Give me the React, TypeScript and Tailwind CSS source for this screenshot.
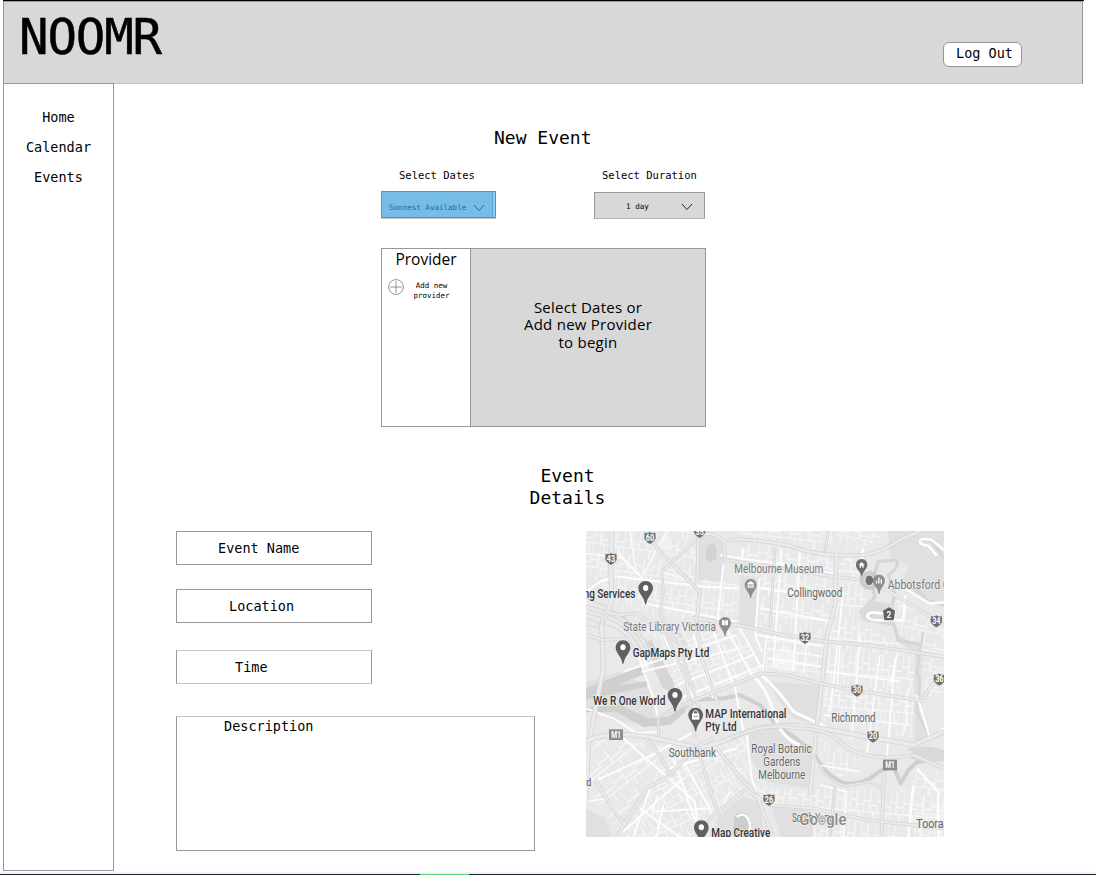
import type { ReactNode } from "react";

const MONO = "font-['DejaVu_Sans_Mono',monospace]";
const SANS = "font-['Open_Sans',sans-serif]";

function Chevron({ stroke }: { stroke: string }) {
  return (
    <svg width="12" height="8" viewBox="0 0 12 8" fill="none" stroke={stroke} strokeWidth="1">
      <path d="M1 1 L6 6.6 L11 1" />
    </svg>
  );
}

function Header() {
  return (
    <header className="ml-[3px] flex h-[84px] w-[1081px] flex-col border-t border-black">
      <div className="flex h-[83px] w-[1080px] items-start justify-between border border-[#979797] border-b-[#c4c4c4] bg-[#d8d8d8]">
        <h1 className="pt-[12px] pl-[15px] text-[49px] leading-[48px] tracking-[-1.1px] [-webkit-text-stroke:0.5px_black]">
          NOOMR
        </h1>
        <button className="mt-[40px] mr-[60px] flex h-[25px] w-[79px] items-center rounded-[6px] border border-[#979797] bg-white pb-px pl-[12px] text-[13.5px] leading-none whitespace-pre">
          Log Out
        </button>
      </div>
    </header>
  );
}

function Sidebar() {
  return (
    <nav className="-mt-px ml-[3px] flex h-[788px] w-[111px] shrink-0 flex-col items-center border border-[#979797] pt-[18px] text-[13.5px] leading-[30px]">
      <a>Home</a>
      <a>Calendar</a>
      <a>Events</a>
    </nav>
  );
}

function Field({ label, className }: { label: string; className: string }) {
  return (
    <div className={"flex h-[34px] w-[196px] items-center border border-[#979797] pt-px text-[13.5px] leading-none " + className}>
      {label}
    </div>
  );
}

type RoadProps = { d: string; w?: number };

function Road({ d, w = 12 }: RoadProps) {
  return (
    <g fill="none" strokeLinejoin="round">
      <path d={d} stroke="#d4d4d4" strokeWidth={w - 1} />
      <path d={d} stroke="#ebebeb" strokeWidth={w - 5.5} />
    </g>
  );
}

function Street({ d, w = 4 }: RoadProps) {
  return <path d={d} fill="none" stroke="#fdfdfd" strokeWidth={w} strokeLinejoin="round" />;
}

function Grid({ id, angle, sx, sy }: { id: string; angle: number; sx: number; sy: number }) {
  return (
    <pattern id={id} width={sx * 2} height={sy * 3} patternUnits="userSpaceOnUse" patternTransform={`rotate(${angle})`}>
      <path
        d={`M0 0V${sy * 3} M${sx} 0V${sy * 2} M0 ${sy}H${sx} M${sx} ${sy * 1.4}H${sx * 2} M0 ${sy * 2}H${sx * 2} M${sx * 1.5} ${sy * 2}V${sy * 3}`}
        fill="none"
        stroke="#f9f9f9"
        strokeWidth="3.2"
      />
    </pattern>
  );
}

function Pin({ x, y, dark = true, children }: { x: number; y: number; dark?: boolean; children?: ReactNode }) {
  const s = dark ? 1 : 0.82;
  return (
    <g transform={`translate(${x} ${y}) scale(${s})`}>
      <path
        d="M0 -22 C13 -22 22 -12 22 0 C22 16 5 24 2 47 Q0 51 -2 47 C-5 24 -22 16 -22 0 C-22 -12 -13 -22 0 -22Z"
        fill={dark ? "#606060" : "#8e8e8e"}
      />
      {children ?? <ellipse cx="0" cy="-1" rx="8" ry="9" fill="#fff" />}
    </g>
  );
}

function Shield({ x, y, n }: { x: number; y: number; n: string }) {
  return (
    <g transform={`translate(${x} ${y})`}>
      <path
        d="M-17 -16 Q-8 -12 0 -18 Q8 -12 17 -16 L18 2 Q14 13 0 20 Q-14 13 -18 2Z"
        fill="#6f6f6f"
        stroke="#f4f4f4"
        strokeWidth="1.5"
      />
      <text y="9" textAnchor="middle" fontSize="25" fontWeight="700" fill="#fff" textLength="25" lengthAdjust="spacingAndGlyphs">
        {n}
      </text>
    </g>
  );
}

function Motorway({ x, y }: { x: number; y: number }) {
  return (
    <g>
      <rect x={x - 21} y={y - 16} width="42" height="32" fill="#8c8c8c" />
      <text x={x} y={y + 9} textAnchor="middle" fontSize="26" fontWeight="700" fill="#fff" textLength="29" lengthAdjust="spacingAndGlyphs">
        M1
      </text>
    </g>
  );
}

type LabelProps = { x: number; y: number; w: number; t: string; tone?: "place" | "area" | "poi" };

function Label({ x, y, w, t, tone = "area" }: LabelProps) {
  const fill = tone === "place" ? "#333" : tone === "area" ? "#666" : "#787878";
  return (
    <text
      x={x}
      y={y}
      fontSize="37"
      fontWeight={tone === "place" ? 500 : 400}
      fill={fill}
      stroke="#f0f0f0"
      strokeWidth="4"
      strokeLinejoin="round"
      paintOrder="stroke"
      textLength={w}
      lengthAdjust="spacingAndGlyphs"
    >
      {t}
    </text>
  );
}

function CityMap() {
  return (
    <svg
      width="358"
      height="306"
      viewBox="18 18 1074 918"
      className="shrink-0 font-[Roboto,sans-serif]"
    >
      <defs>
        <Grid id="north" angle={8} sx={23} sy={24} />
        <Grid id="carlton" angle={6} sx={30} sy={26} />
        <Grid id="centre" angle={-22} sx={24} sy={27} />
        <Grid id="east" angle={5} sx={20} sy={34} />
        <Grid id="south" angle={-25} sx={24} sy={20} />
        <Grid id="port" angle={-38} sx={40} sy={24} />
        <Grid id="abbot" angle={12} sx={36} sy={19} />
      </defs>
      <rect x="18" y="18" width="1074" height="918" fill="#e9e9e9" />

      {/* parks and reserves */}
      <g fill="#e0e0e0">
        <path d="M352 36 Q400 20 432 60 L428 172 L345 165Z" />
        <path d="M482 150 L540 158 L528 305 L478 298Z" />
        <path d="M505 620 L600 610 L700 690 L690 790 L560 770 L512 700Z" />
        <path d="M560 470 L725 480 L710 600 L640 580 L590 520Z" />
        <path d="M412 870 L490 815 L540 830 L560 936 L400 936Z" />
        <path d="M575 840 L690 850 L700 936 L600 936Z" />
        <path d="M925 18 H1092 V245 L1040 235 L960 190 L985 120 L930 95Z" />
        <path d="M955 330 L1030 370 L1020 560 L1060 640 L1003 660 L1005 380 L950 350Z" />
        <path d="M18 470 L120 440 L210 490 L230 600 L130 590 L18 555Z" />
        <path d="M18 850 L75 880 L95 936 H18Z" />
        <path d="M290 315 L325 350 L325 405 L292 395Z" />
      </g>
      <path d="M378 78 Q382 55 400 58 Q414 65 408 105 Q385 115 378 100Z" fill="#d3d3d3" />
      <path d="M462 880 Q470 855 500 865 Q512 890 500 936 H460Z" fill="#cdcdcd" />
      <path d="M595 375 L620 360 L642 385 L638 440 L575 425Z M245 38 L262 28 L278 68 L255 80Z" fill="#f2f2f2" />

      {/* residential blocks */}
      <path d="M18 18 H350 L340 290 L220 265 L110 240 L18 130Z" fill="url(#north)" />
      <path d="M350 160 L478 175 L470 300 L330 270Z" fill="url(#carlton)" />
      <path d="M480 18 H760 L755 345 L540 310 L540 150 L480 130Z" fill="url(#carlton)" />
      <path d="M775 95 L840 100 L870 190 L835 290 L950 350 L1003 385 L1000 640 L730 590 L738 350Z" fill="url(#east)" />
      <path d="M560 330 L738 350 L725 470 L545 435Z" fill="url(#carlton)" />
      <path d="M770 18 H925 L850 75 L765 70Z" fill="url(#abbot)" />
      <path d="M950 205 L1092 300 V525 L1030 510 L1020 370 L955 330Z" fill="url(#abbot)" />
      <path d="M190 400 L480 305 L550 430 L340 540 L270 490Z" fill="url(#centre)" />
      <path d="M180 290 L330 300 L420 330 L200 395Z" fill="url(#centre)" />
      <path d="M250 690 L500 620 L512 780 L420 870 L350 936 H130 L210 790Z" fill="url(#south)" />
      <path d="M18 640 L250 660 L200 790 L100 900 L18 780Z" fill="url(#port)" />
      <path d="M520 780 L710 800 L705 860 L580 845Z M715 640 L850 700 L780 760 L710 680Z" fill="url(#east)" />
      <path d="M700 790 H1092 V936 H700Z" fill="url(#east)" />
      <path d="M1000 730 L1092 740 V936 H1000Z" fill="url(#carlton)" />

      {/* rail yards */}
      <g fill="none" stroke="#d8d8d8" strokeWidth="3.5">
        <path d="M18 240 L90 260 Q150 280 190 340 T290 500" />
        <path d="M18 252 L85 270 Q145 290 180 345 T280 505" />
        <path d="M18 265 L80 282 Q135 298 168 350 T268 505" />
        <path d="M18 280 L75 300 Q130 310 160 365" />
        <path d="M18 300 L60 310 M18 220 L80 245 L140 280" />
      </g>
      <path d="M195 350 L215 345 L285 480 L268 500 L245 485Z" fill="#d6d6d6" />

      {/* docks, river and lakes */}
      <g fill="#cfcfcf">
        <path d="M18 490 L180 425 L200 435 L192 448 L115 480 L205 468 L200 486 L85 510 L18 522Z" />
        <path d="M18 548 L120 540 L205 580 L262 576 L320 540 L315 562 L270 600 L190 606 L110 560 L18 562Z" />
      </g>
      <g fill="none" stroke="#cfcfcf" strokeLinejoin="round">
        <path d="M300 555 L350 525 L430 520 L480 510 L540 540 L590 600 L640 635 L700 680 Q730 750 790 773 Q830 782 870 760 L905 735 L940 725 L962 775 L985 735 L1010 712 L1092 700" strokeWidth="12" />
        <path d="M985 675 Q1040 660 1092 680 M1030 320 L1010 440 L1020 470 L1010 560 L1050 640" stroke="#d6d6d6" strokeWidth="7" />
      </g>
      <path d="M1000 670 Q1045 655 1092 680 V705 Q1040 720 990 700Z" fill="#d9d9d9" />
      <path
        d="M840 265 L885 215 Q870 175 895 110 L950 105 Q960 125 925 150 L945 210 L935 245 L862 270 Q865 292 940 295 L955 345 L1025 360 M1015 55 Q1040 30 1065 60 L1092 100 M960 190 Q1000 170 1040 225 L1092 240"
        fill="none"
        stroke="#d6d6d6"
        strokeWidth="10"
        strokeLinejoin="round"
      />
      <path d="M840 262 Q850 238 885 228 L940 240 V298 L870 292 Q838 290 840 262Z" fill="#dadada" />

      {/* through streets */}
      <Street d="M115 85 L195 168 M110 155 L370 185 L476 190 M18 200 L60 170 L90 160" w={7} />
      <Street d="M190 235 L330 262 L470 290 M420 90 L560 112 L760 145 M430 118 L412 290" w={6} />
      <Street d="M310 160 L240 140 M18 85 L130 100 M150 18 L165 125 M260 18 L190 150" />
      <Street d="M538 160 L526 330 L545 380 M660 80 L640 440 M605 70 L580 420 M490 70 L480 150" w={6} />
      <Street d="M540 250 L760 290 M540 190 L720 215 M560 400 L725 425 M530 330 L740 365" w={6} />
      <Street d="M130 440 L470 330 M185 440 L480 370 M290 480 L520 390 M300 520 L540 425" w={6} />
      <Street d="M175 390 L220 520 L235 580 M190 400 L200 430 M250 330 L345 530 M340 330 L400 520 M400 320 L465 490 L490 620 M475 300 L545 430 M440 310 L520 460" w={6} />
      <Street d="M525 460 Q560 490 580 560 Q600 640 660 660 M545 450 Q600 500 640 560 L735 605" w={9} />
      <Street d="M850 70 Q835 120 880 165 L910 190 M970 285 L890 286 Q862 284 862 272 Q864 262 882 262 L925 268 M970 285 L975 210 M1092 75 L1055 45 Q1020 38 1020 50 Q1022 60 1045 62 L1070 92 M960 180 Q1010 215 1050 235 L1092 232" w={8} />
      <Street d="M790 200 L750 560 M840 330 L815 640 M900 390 L860 690 M945 400 L920 700 M740 440 L960 470 M730 570 L990 600 M780 360 L770 500" w={5} />
      <Street d="M18 550 L100 580 L170 625 L235 620 M130 640 L345 830 L350 890 M40 770 L215 690 L345 620 M300 690 L400 870 M235 740 L470 670" w={6} />
      <Street d="M280 700 L345 885 M210 790 L160 936 M250 840 L230 936 M180 850 L300 936 M500 630 L515 760 L530 800 M310 760 L230 830 L110 936" w={6} />
      <Street d="M20 830 L80 820 L120 870 M450 800 L420 860 M235 810 L215 860 L390 850 M700 690 L710 720 L840 740 M720 780 L800 800 L790 936" w={5} />
      <Street d="M470 875 Q500 855 510 900 V936 M1010 510 L1050 640 L1092 610 M1010 730 L1075 800 V936 M1000 780 L985 936" w={7} />
      <Street d="M955 370 L930 480 M985 490 L975 620 M560 330 L548 440 M680 360 L670 445 M560 370 L735 395" />

      {/* arterials */}
      <Road d="M95 18 L92 110 L95 225 L65 300 L70 430 L45 560 L25 660 L18 830" w={16} />
      <Road d="M65 300 L72 260 L120 270 L170 265 L260 330 L320 470 L345 640" w={11} />
      <Road d="M200 18 L235 75 L360 200 L350 290 L365 400 L415 540" w={12} />
      <Road d="M350 18 L345 50 L245 140 L250 200 L240 270 L300 370 L360 560" w={10} />
      <Road d="M355 18 L352 180 M355 40 Q390 10 430 48 L470 45 M432 50 L435 105 L545 120 L760 155 L850 165 L920 195 L1092 300" w={12} />
      <Road d="M465 42 Q600 50 660 72 T850 90 Q900 85 960 45 L1020 18" w={13} />
      <Road d="M770 90 L765 240 L740 340 L725 480 L710 605 L690 810" w={14} />
      <Road d="M18 330 L70 345 L150 340 M335 278 L480 302 L600 328 L740 350 L860 360 L1092 395" w={12} />
      <Road d="M260 560 L345 525 L545 445 L620 450 L740 480 L850 500 L1030 528 Q1040 480 1092 460" w={12} />
      <Road d="M235 650 L235 575 L345 530 M585 70 L570 310 M745 18 L735 80" w={9} />
      <Road d="M18 650 Q80 615 200 635 Q280 650 350 668 Q400 665 520 612 Q620 590 750 615 L860 635 L1000 660 L1092 620" w={16} />
      <Road d="M450 640 Q560 590 650 610 Q750 610 790 660 Q870 715 1000 690 L1092 730" w={12} />
      <Road d="M45 765 Q95 850 135 900 M110 936 L200 790 L270 750 L345 668 L400 640 M410 670 L500 780 Q545 800 555 936" w={12} />
      <Road d="M500 790 L400 870 L350 936 M350 668 L410 850 M200 640 L245 700 L270 750" w={11} />
      <Road d="M515 805 L570 840 L700 850 L860 885 L1092 910 M530 810 L580 936 M912 740 L905 936" w={12} />
      <Road d="M700 690 Q740 775 800 782 L870 770 L905 790 M765 780 L750 936" w={9} />

      {/* highlighted venue */}
      <circle cx="868" cy="166" r="29" fill="#c4c4c4" opacity="0.8" />

      {/* labels */}
      <Label x={463} y={144} w={267} t="Melbourne Museum" tone="poi" />
      <Label x={622} y={217} w={165} t="Collingwood" />
      <Label x={923} y={192} w={186} t="Abbotsford C" tone="poi" />
      <Label x={11} y={219} w={155} t="ng Services" tone="place" />
      <Label x={130} y={318} w={278} t="State Library Victoria" tone="poi" />
      <Label x={158} y={396} w={230} t="GapMaps Pty Ltd" tone="place" />
      <Label x={40} y={539} w={216} t="We R One World" tone="place" />
      <Label x={376} y={579} w={243} t="MAP International" tone="place" />
      <Label x={376} y={619} w={94} t="Pty Ltd" tone="place" />
      <Label x={266} y={697} w={142} t="Southbank" />
      <Label x={514} y={683} w={181} t="Royal Botanic" />
      <Label x={550} y={722} w={111} t="Gardens" />
      <Label x={535} y={762} w={141} t="Melbourne" />
      <Label x={754} y={591} w={133} t="Richmond" />
      <Label x={1009} y={909} w={98} t="Toorak" />
      <Label x={394} y={936} w={177} t="Map Creative" tone="place" />
      <text x="10" y="783" fontSize="30" fill="#555" textLength="24" lengthAdjust="spacingAndGlyphs">
        rd
      </text>
      <Label x={636} y={892} w={126} t="South Yarra" />

      {/* markers */}
      <Pin x={197} y={190} />
      <Pin x={129} y={368} />
      <Pin x={285} y={511} />
      <Pin x={364} y={908} />
      <Pin x={347} y={570}>
        <path d="M-11 -5 H11 V14 H-11Z" fill="#fff" />
        <path d="M-6 -5 V-10 Q0 -18 6 -10 V-5" fill="none" stroke="#fff" strokeWidth="3" />
        <path d="M-6 2 Q0 10 6 2" fill="none" stroke="#606060" strokeWidth="2.5" />
      </Pin>
      <Pin x={512} y={180} dark={false}>
        <path d="M-12 -6 L0 -15 L12 -6 V-3 H-12Z M-11 -1 H11 V11 H-11Z" fill="#fff" />
        <path d="M-5 11 V3 H5 V11" fill="none" stroke="#8e8e8e" strokeWidth="3" />
      </Pin>
      <Pin x={435} y={294} dark={false}>
        <path d="M-11 -10 Q-5 -12 -1 -8 V10 Q-5 6 -11 8Z M11 -10 Q5 -12 1 -8 V10 Q5 6 11 8Z" fill="#fff" />
      </Pin>
      <g>
        <path d="M845 102 C857 102 862 111 862 120 C862 134 848 139 846 154 H844 C842 139 828 134 828 120 C828 111 833 102 845 102Z" fill="#707070" />
        <path d="M836 120 L845 111 L854 120 H851 V128 H847 V123 H843 V128 H839 V120Z" fill="#fff" />
      </g>
      <ellipse cx="868" cy="166" rx="13" ry="16" fill="#707070" stroke="#e8e8e8" strokeWidth="3" />
      <Pin x={897} y={167} dark={false}>
        <path d="M-11 0 H-7 V10 H-11Z M-3 -12 H2 V10 H-3Z M6 -5 H11 V10 H6Z" fill="#fff" />
      </Pin>
      <Shield x={93} y={101} n="43" />
      <Shield x={210} y={38} n="60" />
      <Shield x={359} y={20} n="55" />
      <Shield x={675} y={338} n="32" />
      <Shield x={1069} y={288} n="34" />
      <Shield x={1078} y={463} n="36" />
      <Shield x={831} y={496} n="30" />
      <Shield x={879} y={634} n="20" />
      <Shield x={567} y={824} n="26" />
      <path d="M927 247 L945 257 L941 286 H913 L909 257Z" fill="#606060" />
      <text x="927" y="278" textAnchor="middle" fontSize="25" fontWeight="700" fill="#fff">2</text>
      <Motorway x={108} y={629} />
      <Motorway x={930} y={720} />
      <text
        x="658"
        y="901"
        fontSize="52"
        fontWeight="500"
        fill="#8a8a8a"
        stroke="#f3f3f3"
        strokeWidth="4"
        paintOrder="stroke"
        textLength="141"
        lengthAdjust="spacingAndGlyphs"
      >
        Go<tspan fill="#b8b8b8">o</tspan>gle
      </text>
    </svg>
  );
}

export default function App() {
  return (
    <div className={"relative h-[875px] w-[1096px] overflow-hidden bg-white text-black " + MONO}>
      <Header />
      <div className="flex h-[787px]">
        <Sidebar />
        <main className="flex flex-1 flex-col">
          <h2 className="ml-[380px] pt-[43px] text-[18px] leading-[22px]">New Event</h2>

          <div className="ml-[267px] flex h-[26px] items-end text-[10.5px] leading-[12px]">
            <div className="mb-[-6px] w-[213px] pl-[18px]">Select Dates</div>
            <div className="mb-[-6px] pl-[8px]">Select Duration</div>
          </div>

          <div className="mt-[16px] ml-[267px] flex h-[28px] items-start justify-between pr-[391px]">
            <div className="flex h-[28px] w-[115px] flex-col border-b border-[#c4c4c4]">
              <div className="flex h-[27px] border border-[#3f9bd0] bg-[#8fcbf3]">
                <div className="flex h-[25px] w-[111px] items-center justify-between border-r border-[#55a5d6] bg-[#75bde8] pt-[7px] pr-[7px] pl-[7px] text-[7.55px] leading-none text-[#236b98]">
                  <span>Soonest Available</span>
                  <Chevron stroke="#236b98" />
                </div>
              </div>
            </div>
            <div className="mt-px flex h-[27px] w-[111px] items-center justify-between border border-[#979797] border-b-[#b4b4b4] bg-[#d8d8d8] pt-[2px] pr-[11px] pl-[31px] text-[7.6px] leading-none">
              <span>1 day</span>
              <Chevron stroke="#222" />
            </div>
          </div>

          <section className="mt-[29px] ml-[267px] flex h-[179px] w-[325px] border border-[#979797]">
            <div className="w-[89px] border-r border-[#979797]">
              <h3 className={"text-center text-[15.5px] leading-[21px] " + SANS}>Provider</h3>
              <div className="flex items-start pt-[9px] pl-[6px]">
                <svg width="16" height="16" viewBox="0 0 16 16" fill="none" stroke="#888" strokeWidth="0.9">
                  <circle cx="8" cy="8" r="7.4" />
                  <path d="M8 2.2V13.8M2.2 8H13.8" />
                </svg>
                <p className="w-[55px] pt-[2px] text-center text-[7.5px] leading-[9.5px]">
                  Add new
                  <br />
                  provider
                </p>
              </div>
            </div>
            <p className={"flex-1 bg-[#d8d8d8] pt-[50px] text-center text-[15px] leading-[17.3px] tracking-[0.25px] " + SANS}>
              Select Dates or
              <br />
              Add new Provider
              <br />
              to begin
            </p>
          </section>

          <h2 className="mt-[38px] ml-[403px] w-[101px] text-center text-[18px] leading-[22px]">
            Event Details
          </h2>

          <div className="mt-[22px] ml-[62px] flex">
            <form className="flex w-[410px] flex-col">
              <Field label="Event Name" className="pl-[41px]" />
              <Field label="Location" className="mt-[24px] pl-[52px]" />
              <Field label="Time" className="mt-[27px] border-y-[#c4c4c4] pl-[58px]" />
              <div className="mt-[32px] h-[135px] w-[359px] border border-[#979797] border-t-[#c4c4c4] pt-px pl-[47px] text-[13.5px] leading-[16px]">
                Description
              </div>
            </form>
            <CityMap />
          </div>
        </main>
      </div>
      <div className="flex h-[4px] flex-col justify-end bg-linear-to-b from-white to-[#e4e4e8]">
        <div className="flex h-px bg-[#1e2235]">
          <div className="ml-[420px] w-[49px] bg-[#5fd47a]" />
        </div>
      </div>
    </div>
  );
}
